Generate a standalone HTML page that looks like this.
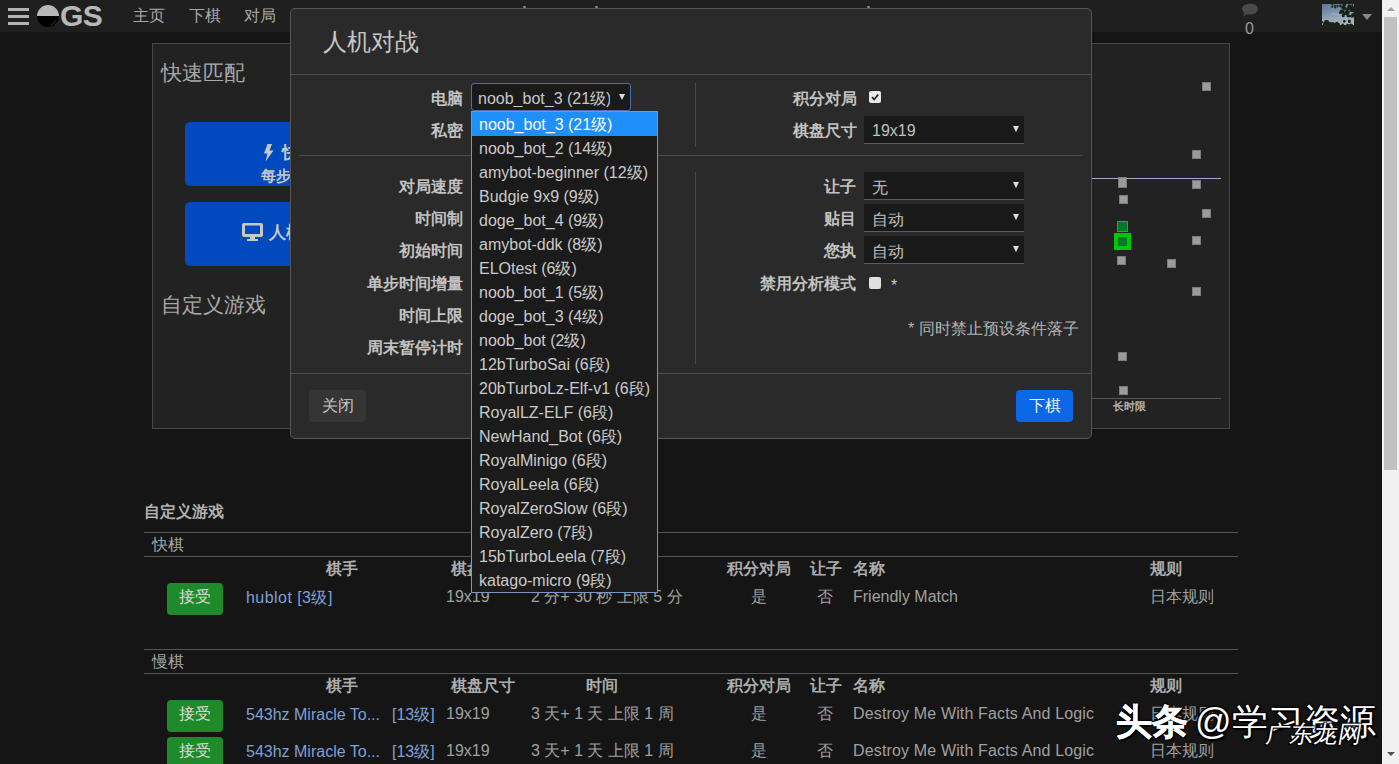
<!DOCTYPE html>
<html><head><meta charset="utf-8">
<style>
*{margin:0;padding:0;box-sizing:border-box}
html,body{width:1399px;height:764px;overflow:hidden;background:#151515;font-family:"Liberation Sans",sans-serif;font-size:16px;color:#c8c8c8}
.a{position:absolute;white-space:nowrap}
#nav{position:absolute;left:0;top:0;width:1383px;height:32px;background:#1f1f1f}
#sb{position:absolute;left:1382px;top:0;width:17px;height:764px;background:#f1f1f1}
#panel{position:absolute;left:152px;top:43px;width:1078px;height:386px;background:#222;border:1px solid #474747}
.bb{position:absolute;background:#0049bf;border-radius:5px}
#modal{position:absolute;left:290px;top:8px;width:802px;height:431px;background:#2a2a2a;border:1px solid #555;border-radius:5px}
.lbl{position:absolute;font-weight:bold;color:#c2c2c2;text-align:right;white-space:nowrap;line-height:17px}
.sel{position:absolute;width:160px;height:28px;background:#1a1a1a;border-bottom:1px solid #5a5a5a}
.sel span{position:absolute;left:8px;top:6px;color:#c0c0c0}
.sel i{position:absolute;right:5px;top:10px;width:0;height:0;border-left:3.5px solid transparent;border-right:3.5px solid transparent;border-top:6px solid #ddd}
#dd{position:absolute;left:471px;top:111px;width:187px;height:482px;background:#1b1b1b;border:1px solid #7897c6}
#dd div{position:absolute;left:7px;height:24px;line-height:25px;color:#cacaca;white-space:nowrap}
.hr{position:absolute;height:1px;background:#505050}
.th{position:absolute;font-weight:bold;color:#acacac;white-space:nowrap;line-height:17px}
.td{position:absolute;color:#a0a0a0;white-space:nowrap;line-height:17px}
.lnk{position:absolute;color:#7fa0d6;white-space:nowrap;line-height:17px}
.acc{position:absolute;width:56px;height:32px;background:#1f8a2a;border-radius:4px;color:#dcdcdc;text-align:center;line-height:28px}
.sq{position:absolute;width:9px;height:9px;background:#9b9b9b;box-shadow:inset 0 0 0 1px #7c7c7c}
</style></head><body>
<div id="nav">
<div class="a" style="left:8px;top:8px;width:21px;height:3px;background:#b3b3b3"></div>
<div class="a" style="left:8px;top:15px;width:21px;height:3px;background:#b3b3b3"></div>
<div class="a" style="left:8px;top:21.5px;width:21px;height:3.5px;background:#b3b3b3"></div>
<svg class="a" style="left:37px;top:5px" width="22" height="22" viewBox="0 0 22 22"><circle cx="11" cy="11" r="11" fill="#000"/><path d="M0 11 A11 11 0 0 1 22 11 Z" fill="#b8b8b8"/><path d="M19 15 A9 9 0 0 1 14 20" stroke="#333" stroke-width="0.8" fill="none"/></svg>
<div class="a" style="left:60px;top:-1px;font-size:30px;font-weight:bold;color:#b8b8b8;line-height:33px;letter-spacing:-0.5px">GS</div>
<div class="a" style="left:133px;top:7px;font-size:16px;color:#a8a8a8;line-height:17px">主页</div>
<div class="a" style="left:189px;top:7px;font-size:16px;color:#a8a8a8;line-height:17px">下棋</div>
<div class="a" style="left:244px;top:7px;font-size:16px;color:#a8a8a8;line-height:17px">对局</div>
<svg class="a" style="left:1241px;top:3px" width="18" height="15" viewBox="0 0 18 15"><ellipse cx="9" cy="6" rx="8" ry="5.5" fill="#494949"/><path d="M4 9 L2 14 L8 10 Z" fill="#494949"/></svg>
<div class="a" style="left:1245px;top:20px;font-size:16px;color:#9a9a9a;line-height:17px">0</div>
<div class="a" style="left:523px;top:6px;width:3px;height:2px;background:#888;border-radius:1px"></div>
<div class="a" style="left:595px;top:6px;width:3px;height:2px;background:#888;border-radius:1px"></div>
<div class="a" style="left:867px;top:6px;width:3px;height:2px;background:#888;border-radius:1px"></div>
<svg class="a" style="left:1322px;top:4px" width="32" height="24" viewBox="0 0 32 24"><defs><linearGradient id="sky" x1="0" y1="0" x2="0.3" y2="1"><stop offset="0" stop-color="#5a7898"/><stop offset="0.7" stop-color="#9aaabb"/><stop offset="1" stop-color="#a8b4c0"/></linearGradient></defs><rect width="32" height="24" fill="url(#sky)"/><path d="M9 9.5 Q14 10 20 11.5" stroke="#b8b6c0" stroke-width="1.2" fill="none" opacity="0.8"/><circle cx="21.3" cy="6.5" r="1.2" fill="#1a2218"/><circle cx="26.5" cy="8.1" r="0.9" fill="#1a2218"/><circle cx="18.2" cy="8.9" r="1.1" fill="#1a2218"/><circle cx="21.3" cy="11.9" r="1.4" fill="#1a2218"/><circle cx="29.7" cy="6.2" r="1.6" fill="#1a2218"/><circle cx="20.1" cy="7.3" r="1.8" fill="#1a2218"/><circle cx="25.3" cy="9.6" r="1.6" fill="#1a2218"/><circle cx="18.9" cy="8.3" r="1.5" fill="#1a2218"/><circle cx="22.2" cy="0.4" r="1.8" fill="#1a2218"/><circle cx="24.6" cy="9.3" r="1.9" fill="#1a2218"/><circle cx="28.0" cy="12.0" r="1.3" fill="#1a2218"/><circle cx="29.2" cy="5.8" r="1.9" fill="#1a2218"/><circle cx="30.3" cy="1.3" r="1.0" fill="#1a2218"/><circle cx="21.0" cy="11.4" r="1.3" fill="#1a2218"/><circle cx="26.8" cy="3.9" r="1.4" fill="#1a2218"/><circle cx="23.4" cy="4.5" r="1.5" fill="#1a2218"/><circle cx="26.2" cy="11.8" r="1.6" fill="#1a2218"/><circle cx="31.0" cy="11.1" r="2.0" fill="#1a2218"/><circle cx="27.4" cy="2.1" r="1.8" fill="#1a2218"/><circle cx="31.5" cy="11.8" r="1.5" fill="#1a2218"/><circle cx="28.0" cy="2.7" r="1.8" fill="#1a2218"/><circle cx="26.0" cy="3.7" r="0.9" fill="#1a2218"/><circle cx="30.0" cy="12.9" r="0.9" fill="#1a2218"/><circle cx="29.2" cy="5.3" r="1.0" fill="#1a2218"/><circle cx="22.1" cy="9.4" r="1.8" fill="#1a2218"/><circle cx="18.6" cy="6.7" r="0.9" fill="#1a2218"/><circle cx="28.1" cy="4.3" r="1.9" fill="#1a2218"/><circle cx="31.7" cy="6.6" r="2.0" fill="#1a2218"/><circle cx="22.3" cy="0.9" r="1.5" fill="#1a2218"/><circle cx="18.4" cy="2.1" r="1.3" fill="#1a2218"/><circle cx="26.5" cy="2.0" r="0.9" fill="#1a2218"/><circle cx="30.1" cy="4.1" r="2.0" fill="#1a2218"/><circle cx="30.6" cy="4.9" r="1.4" fill="#1a2218"/><circle cx="25.3" cy="8.4" r="1.5" fill="#1a2218"/><circle cx="25.8" cy="8.1" r="1.9" fill="#1a2218"/><circle cx="25.1" cy="5.6" r="1.7" fill="#1a2218"/><circle cx="21.3" cy="3.6" r="2.0" fill="#1a2218"/><circle cx="25.3" cy="7.1" r="0.8" fill="#1a2218"/><circle cx="23.8" cy="7.5" r="0.8" fill="#1a2218"/><circle cx="26.6" cy="8.2" r="0.9" fill="#1a2218"/><circle cx="15.6" cy="2.3" r="1.1" fill="#22301f"/><circle cx="13.2" cy="3.5" r="1.1" fill="#22301f"/><circle cx="10.2" cy="0.3" r="1.1" fill="#22301f"/><circle cx="18.7" cy="1.3" r="0.9" fill="#22301f"/><circle cx="15.3" cy="1.6" r="0.9" fill="#22301f"/><circle cx="12.8" cy="1.8" r="1.0" fill="#22301f"/><circle cx="12.7" cy="1.9" r="1.1" fill="#22301f"/><circle cx="10.2" cy="2.8" r="1.1" fill="#22301f"/><circle cx="9.9" cy="20.1" r="1.9" fill="#192317"/><circle cx="7.6" cy="19.9" r="1.4" fill="#192317"/><circle cx="22.3" cy="17.3" r="1.3" fill="#192317"/><circle cx="10.7" cy="23.2" r="1.4" fill="#192317"/><circle cx="27.4" cy="17.8" r="1.3" fill="#192317"/><circle cx="20.8" cy="23.1" r="1.4" fill="#192317"/><circle cx="7.2" cy="19.6" r="1.5" fill="#192317"/><circle cx="6.1" cy="23.0" r="2.0" fill="#192317"/><circle cx="5.9" cy="19.7" r="1.9" fill="#192317"/><circle cx="20.5" cy="22.5" r="1.3" fill="#192317"/><circle cx="4.2" cy="19.8" r="1.9" fill="#192317"/><circle cx="8.7" cy="20.7" r="1.4" fill="#192317"/><circle cx="13.4" cy="21.0" r="2.1" fill="#192317"/><circle cx="5.0" cy="18.0" r="2.1" fill="#192317"/><circle cx="28.2" cy="23.9" r="1.4" fill="#192317"/><circle cx="30.4" cy="23.5" r="1.1" fill="#192317"/><circle cx="23.9" cy="22.8" r="1.7" fill="#192317"/><circle cx="16.6" cy="20.4" r="1.3" fill="#192317"/><circle cx="7.3" cy="19.3" r="1.6" fill="#192317"/><circle cx="9.2" cy="23.1" r="0.9" fill="#192317"/><circle cx="28.9" cy="21.7" r="2.1" fill="#192317"/><circle cx="28.7" cy="23.2" r="1.6" fill="#192317"/><circle cx="0.4" cy="22.5" r="1.0" fill="#192317"/><circle cx="9.6" cy="22.3" r="1.5" fill="#192317"/><circle cx="13.2" cy="23.7" r="1.7" fill="#192317"/><circle cx="10.9" cy="20.3" r="2.0" fill="#192317"/><circle cx="15.3" cy="22.9" r="1.3" fill="#192317"/><circle cx="6.3" cy="21.7" r="1.9" fill="#192317"/><circle cx="5.5" cy="22.8" r="2.1" fill="#192317"/><circle cx="25.8" cy="22.7" r="0.8" fill="#192317"/><circle cx="20.1" cy="23.0" r="0.9" fill="#192317"/><circle cx="8.7" cy="20.3" r="1.5" fill="#192317"/><circle cx="13.5" cy="21.4" r="1.9" fill="#192317"/><circle cx="0.1" cy="18.3" r="1.0" fill="#192317"/><circle cx="4.0" cy="18.4" r="2.2" fill="#192317"/><circle cx="27.3" cy="17.1" r="1.5" fill="#192317"/><circle cx="10.1" cy="20.6" r="1.3" fill="#192317"/><circle cx="20.7" cy="20.9" r="1.3" fill="#192317"/><circle cx="6.1" cy="20.6" r="1.0" fill="#192317"/><circle cx="17.8" cy="22.6" r="1.3" fill="#192317"/><circle cx="2.6" cy="19.1" r="1.3" fill="#192317"/><circle cx="19.3" cy="22.4" r="1.3" fill="#192317"/><circle cx="25.6" cy="21.2" r="1.4" fill="#192317"/><circle cx="11.9" cy="21.5" r="1.8" fill="#192317"/><circle cx="13.5" cy="22.5" r="1.4" fill="#192317"/><circle cx="7.8" cy="21.7" r="1.8" fill="#192317"/><circle cx="2.3" cy="20.5" r="1.4" fill="#192317"/><circle cx="28.1" cy="23.5" r="1.3" fill="#192317"/><circle cx="28.7" cy="22.4" r="1.2" fill="#192317"/><circle cx="14.9" cy="19.6" r="1.9" fill="#192317"/><rect x="0" y="21" width="32" height="3" fill="#1a2418"/></svg>
<div class="a" style="left:1362px;top:14px;width:0;height:0;border-left:5px solid transparent;border-right:5px solid transparent;border-top:6px solid #888"></div>
</div>
<div id="panel"></div>
<div class="a" style="left:161px;top:61px;font-size:21px;color:#a8a8a8;line-height:23px">快速匹配</div>
<div class="a" style="left:161px;top:293px;font-size:21px;color:#a8a8a8;line-height:23px">自定义游戏</div>
<div class="bb" style="left:185px;top:122px;width:200px;height:64px"></div>
<div class="bb" style="left:185px;top:202px;width:200px;height:64px"></div>
<svg class="a" style="left:263px;top:144px" width="12" height="18" viewBox="0 0 12 18"><path d="M4.5 0 L9 0 L6.5 6.5 L10.5 6.5 L2.5 17.5 L4.5 9.5 L1 9.5 Z" fill="#c8c8c8"/></svg>
<div class="a" style="left:282px;top:143px;font-size:17px;font-weight:bold;color:#c8c8c8;line-height:19px">快速</div>
<div class="a" style="left:261px;top:167px;font-size:15px;font-weight:bold;color:#c8c8c8;line-height:17px">每步时间</div>
<svg class="a" style="left:242px;top:223px" width="21" height="18" viewBox="0 0 21 18"><rect x="0" y="0" width="21" height="14" rx="2" fill="#c8c8c8"/><rect x="3" y="2.5" width="15" height="8.5" fill="#0049bf"/><rect x="8" y="14" width="5" height="2" fill="#c8c8c8"/><rect x="5" y="16" width="11" height="2" fill="#c8c8c8"/></svg>
<div class="a" style="left:269px;top:223px;font-size:17px;font-weight:bold;color:#c8c8c8;line-height:19px">人机对战</div>
<div class="a" style="left:1091px;top:178px;width:130px;height:1px;background:#a6a6d6"></div>
<div class="a" style="left:1091px;top:398px;width:130px;height:1px;background:#555"></div>
<div class="a" style="left:1113px;top:400px;font-size:11px;font-weight:bold;color:#b0b0b0;line-height:13px">长时限</div>
<div class="sq" style="left:1202px;top:82px"></div>
<div class="sq" style="left:1192px;top:150px"></div>
<div class="sq" style="left:1118px;top:177px;width:9px;height:11px"></div>
<div class="sq" style="left:1192px;top:180px"></div>
<div class="sq" style="left:1119px;top:195px"></div>
<div class="sq" style="left:1202px;top:209px"></div>
<div class="a" style="left:1117px;top:221px;width:11px;height:11px;background:#007a28;border:1.5px solid #00c800"></div>
<div class="a" style="left:1114px;top:233px;width:17px;height:17px;background:#007a28;border:4px solid #00c800"></div>
<div class="sq" style="left:1192px;top:236px"></div>
<div class="sq" style="left:1117px;top:256px"></div>
<div class="sq" style="left:1167px;top:259px"></div>
<div class="sq" style="left:1192px;top:287px"></div>
<div class="sq" style="left:1118px;top:352px"></div>
<div class="sq" style="left:1119px;top:386px"></div>
<div class="a" style="left:144px;top:503px;font-weight:bold;color:#b0b0b0;line-height:17px">自定义游戏</div>
<div class="hr" style="left:144px;top:532px;width:1094px;background:#555"></div>
<div class="a" style="left:152px;top:536px;color:#a8a8a8;line-height:17px">快棋</div>
<div class="hr" style="left:144px;top:556px;width:1094px;background:#555"></div>
<div class="th" style="left:326px;top:560px">棋手</div>
<div class="th" style="left:451px;top:560px">棋盘尺寸</div>
<div class="th" style="left:586px;top:560px">时间</div>
<div class="th" style="left:727px;top:560px">积分对局</div>
<div class="th" style="left:810px;top:560px">让子</div>
<div class="th" style="left:853px;top:560px">名称</div>
<div class="th" style="left:1150px;top:560px">规则</div>
<div class="acc" style="left:167px;top:583px">接受</div>
<div class="lnk" style="left:246px;top:589px;letter-spacing:0.45px">hublot [3级]</div>
<div class="td" style="left:446px;top:588px">19x19</div>
<div class="td" style="left:531px;top:588px">2 分+ 30 秒 上限 5 分</div>
<div class="td" style="left:751px;top:588px">是</div>
<div class="td" style="left:817px;top:588px">否</div>
<div class="td" style="left:853px;top:588px">Friendly Match</div>
<div class="td" style="left:1150px;top:588px">日本规则</div>
<div class="hr" style="left:144px;top:649px;width:1094px;background:#555"></div>
<div class="a" style="left:152px;top:653px;color:#a8a8a8;line-height:17px">慢棋</div>
<div class="hr" style="left:144px;top:673px;width:1094px;background:#555"></div>
<div class="th" style="left:326px;top:677px">棋手</div>
<div class="th" style="left:451px;top:677px">棋盘尺寸</div>
<div class="th" style="left:586px;top:677px">时间</div>
<div class="th" style="left:727px;top:677px">积分对局</div>
<div class="th" style="left:810px;top:677px">让子</div>
<div class="th" style="left:853px;top:677px">名称</div>
<div class="th" style="left:1150px;top:677px">规则</div>
<div class="acc" style="left:167px;top:700px">接受</div>
<div class="lnk" style="left:246px;top:706px">543hz Miracle To...</div>
<div class="lnk" style="left:392px;top:706px">[13级]</div>
<div class="td" style="left:446px;top:705px">19x19</div>
<div class="td" style="left:531px;top:705px">3 天+ 1 天 上限 1 周</div>
<div class="td" style="left:751px;top:705px">是</div>
<div class="td" style="left:817px;top:705px">否</div>
<div class="td" style="left:853px;top:705px;letter-spacing:0.15px">Destroy Me With Facts And Logic</div>
<div class="td" style="left:1150px;top:705px">日本规则</div>
<div class="acc" style="left:167px;top:737px">接受</div>
<div class="lnk" style="left:246px;top:743px">543hz Miracle To...</div>
<div class="lnk" style="left:392px;top:743px">[13级]</div>
<div class="td" style="left:446px;top:742px">19x19</div>
<div class="td" style="left:531px;top:742px">3 天+ 1 天 上限 1 周</div>
<div class="td" style="left:751px;top:742px">是</div>
<div class="td" style="left:817px;top:742px">否</div>
<div class="td" style="left:853px;top:742px;letter-spacing:0.15px">Destroy Me With Facts And Logic</div>
<div class="td" style="left:1150px;top:742px">日本规则</div>
<div class="a" style="left:1116px;top:702px;font-size:36px;font-weight:900;color:#fff;line-height:40px;-webkit-text-stroke:0.6px #fff;text-shadow:1.5px 2px 1px #000,-1px -1px 1px #000,1px -1px 1px #000,-1px 1px 1px #000">头条</div>
<div class="a" style="left:1195px;top:702px;font-size:36px;color:#fff;line-height:40px;text-shadow:1.5px 2px 1px #000,-1px -1px 1px #000,1px -1px 1px #000,-1px 1px 1px #000">@</div>
<div class="a" style="left:1232px;top:702px;font-size:36px;color:#fff;line-height:40px;text-shadow:1.5px 2px 1px #000,-1px -1px 1px #000,1px -1px 1px #000,-1px 1px 1px #000">学习资源</div>
<div class="a" style="left:1266px;top:720px;font-size:23.5px;color:#fff;line-height:28px;transform:skewX(-10deg);text-shadow:1px 1px 1px #000,-1px -1px 1px #000,1px -1px 1px #000,-1px 1px 1px #000">广东龙网</div>
<div id="modal"></div>
<div class="a" style="left:323px;top:28px;font-size:24px;color:#c5c5c5;line-height:27px">人机对战</div>
<div class="hr" style="left:291px;top:74px;width:800px;background:#4e4e4e"></div>
<div class="lbl" style="left:431px;top:90px">电脑</div>
<div class="lbl" style="left:431px;top:122px">私密</div>
<div class="a" style="left:471px;top:83px;width:160px;height:28px;background:#1a1a1a;border:1.5px solid #4b6fae;border-radius:3px"></div>
<div class="a" style="left:478px;top:90px;width:132px;overflow:hidden;color:#c8c8c8;line-height:17px">noob_bot_3 (21级)</div>
<div class="a" style="left:619px;top:94px;width:0;height:0;border-left:3.5px solid transparent;border-right:3.5px solid transparent;border-top:6px solid #ddd"></div>
<div class="a" style="left:695px;top:83px;width:1px;height:64px;background:#4a4a4a"></div>
<div class="lbl" style="left:793px;top:90px">积分对局</div>
<div class="a" style="left:869px;top:91px;width:12px;height:12px;background:#e8e8e8;border-radius:2px"></div>
<svg class="a" style="left:870px;top:92px" width="10" height="10" viewBox="0 0 10 10"><path d="M2 5.2 L4.2 7.5 L8.2 2.5" stroke="#222" stroke-width="1.8" fill="none"/></svg>
<div class="lbl" style="left:793px;top:122px">棋盘尺寸</div>
<div class="sel" style="left:864px;top:116px"><span>19x19</span><i></i></div>
<div class="hr" style="left:299px;top:155px;width:784px;background:#4a4a4a"></div>
<div class="a" style="left:695px;top:172px;width:1px;height:192px;background:#4a4a4a"></div>
<div class="lbl" style="left:399px;top:178px">对局速度</div>
<div class="lbl" style="left:415px;top:210px">时间制</div>
<div class="lbl" style="left:399px;top:242px">初始时间</div>
<div class="lbl" style="left:367px;top:275px">单步时间增量</div>
<div class="lbl" style="left:399px;top:307px">时间上限</div>
<div class="lbl" style="left:367px;top:339px">周末暂停计时</div>
<div class="lbl" style="left:824px;top:178px">让子</div>
<div class="lbl" style="left:824px;top:210px">贴目</div>
<div class="lbl" style="left:824px;top:242px">您执</div>
<div class="lbl" style="left:760px;top:275px">禁用分析模式</div>
<div class="sel" style="left:864px;top:172px"><span>无</span><i></i></div>
<div class="sel" style="left:864px;top:204px"><span>自动</span><i></i></div>
<div class="sel" style="left:864px;top:236px"><span>自动</span><i></i></div>
<div class="a" style="left:869px;top:277px;width:12px;height:12px;background:#e0e0e0;border-radius:2px"></div>
<div class="a" style="left:891px;top:277px;color:#c8c8c8;line-height:17px">*</div>
<div class="a" style="left:908px;top:320px;color:#b3b3b3;line-height:17px">* 同时禁止预设条件落子</div>
<div class="hr" style="left:291px;top:373px;width:800px;background:#4e4e4e"></div>
<div class="a" style="left:309px;top:390px;width:57px;height:32px;background:#353535;border-radius:4px;color:#c8c8c8;text-align:center;line-height:31px">关闭</div>
<div class="a" style="left:1016px;top:390px;width:57px;height:32px;background:#0a68e6;border-radius:4px;color:#f2f2f2;text-align:center;line-height:31px">下棋</div>
<div id="dd"><div style="left:0;top:0;width:185px;height:24px;background:#1f8ffb"></div><div style="top:0px;color:#fafafa">noob_bot_3 (21级)</div><div style="top:24px;color:#cacaca">noob_bot_2 (14级)</div><div style="top:48px;color:#cacaca">amybot-beginner (12级)</div><div style="top:72px;color:#cacaca">Budgie 9x9 (9级)</div><div style="top:96px;color:#cacaca">doge_bot_4 (9级)</div><div style="top:120px;color:#cacaca">amybot-ddk (8级)</div><div style="top:144px;color:#cacaca">ELOtest (6级)</div><div style="top:168px;color:#cacaca">noob_bot_1 (5级)</div><div style="top:192px;color:#cacaca">doge_bot_3 (4级)</div><div style="top:216px;color:#cacaca">noob_bot (2级)</div><div style="top:240px;color:#cacaca">12bTurboSai (6段)</div><div style="top:264px;color:#cacaca">20bTurboLz-Elf-v1 (6段)</div><div style="top:288px;color:#cacaca">RoyalLZ-ELF (6段)</div><div style="top:312px;color:#cacaca">NewHand_Bot (6段)</div><div style="top:336px;color:#cacaca">RoyalMinigo (6段)</div><div style="top:360px;color:#cacaca">RoyalLeela (6段)</div><div style="top:384px;color:#cacaca">RoyalZeroSlow (6段)</div><div style="top:408px;color:#cacaca">RoyalZero (7段)</div><div style="top:432px;color:#cacaca">15bTurboLeela (7段)</div><div style="top:456px;color:#cacaca">katago-micro (9段)</div></div>
<div id="sb">
<div class="a" style="left:5px;top:7px;width:0;height:0;border-left:4px solid transparent;border-right:4px solid transparent;border-bottom:4px solid #a3a3a3"></div>
<div class="a" style="left:2px;top:17px;width:13px;height:453px;background:#c1c1c1"></div>
<div class="a" style="left:5px;top:752px;width:0;height:0;border-left:4px solid transparent;border-right:4px solid transparent;border-top:4px solid #505050"></div>
</div>
</body></html>
